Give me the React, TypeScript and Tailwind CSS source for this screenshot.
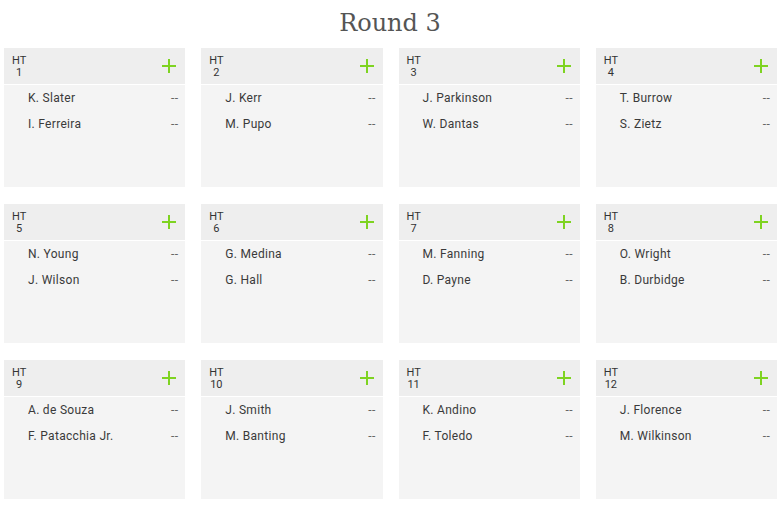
import React from "react";

const heats: [string, string][] = [
  ["K. Slater", "I. Ferreira"],
  ["J. Kerr", "M. Pupo"],
  ["J. Parkinson", "W. Dantas"],
  ["T. Burrow", "S. Zietz"],
  ["N. Young", "J. Wilson"],
  ["G. Medina", "G. Hall"],
  ["M. Fanning", "D. Payne"],
  ["O. Wright", "B. Durbidge"],
  ["A. de Souza", "F. Patacchia Jr."],
  ["J. Smith", "M. Banting"],
  ["K. Andino", "F. Toledo"],
  ["J. Florence", "M. Wilkinson"],
];

function Plus() {
  return (
    <svg width="14" height="14" viewBox="0 0 14 14" className="block">
      <rect x="6" y="0" width="2" height="14" fill="#7ed321" />
      <rect x="0" y="6" width="14" height="2" fill="#7ed321" />
    </svg>
  );
}

export default function App() {
  return (
    <div
      className="w-[780px] h-[506px] bg-white overflow-hidden"
      style={{ fontFamily: "Roboto, 'Liberation Sans', sans-serif" }}
    >
      <div className="h-[48px] flex justify-center pt-[6px]">
        <h1
          className="text-[24px] leading-[34px] text-[#555555] font-light"
          style={{ fontFamily: "'DejaVu Serif', 'Liberation Serif', serif" }}
        >
          Round 3
        </h1>
      </div>
      <div className="grid grid-cols-4 gap-x-4 gap-y-[17px] pl-[4px] pr-[3px]">
        {heats.map((h, i) => (
          <div key={i} className="h-[139px] bg-[#f4f4f4] flex flex-col">
            <div className="h-[37px] bg-[#eeeeee] border-b border-white flex items-center justify-between pl-[8px] pr-[9px]">
              <div className="flex flex-col items-center text-[11px] leading-[12px] text-[#333333] pt-[1px]">
                <span className="block h-[12px]">HT</span>
                <span className="block h-[12px]">{i + 1}</span>
              </div>
              <Plus />
            </div>
            <div className="flex flex-col pl-[24px] pr-[7px] text-[12px] text-[#3a3a3a] tracking-[0.3px]">
              {h.map((n) => (
                <div key={n} className="h-[26px] flex items-center justify-between">
                  <span>{n}</span>
                  <span className="text-[#666666]">--</span>
                </div>
              ))}
            </div>
          </div>
        ))}
      </div>
    </div>
  );
}
